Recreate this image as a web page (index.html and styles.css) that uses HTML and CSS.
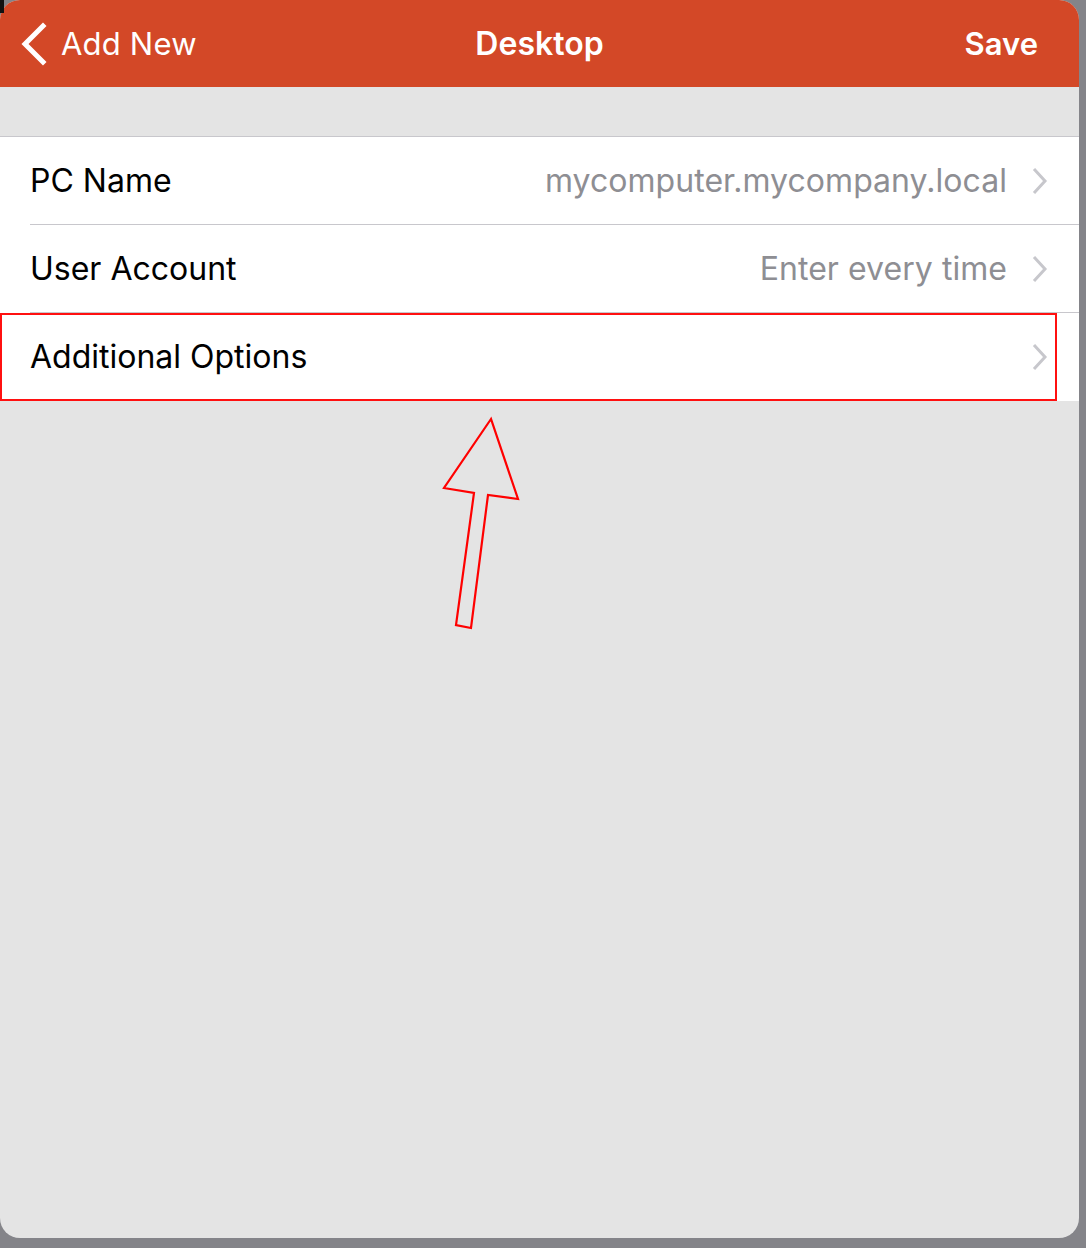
FILE: index.html
```html
<!DOCTYPE html>
<html>
<head>
<meta charset="utf-8">
<link rel="stylesheet" href="styles.css">
</head>
<body>
<div class="mark"></div>
<div class="panel">
  <header class="navbar">
    <div class="nav-left">
      <svg class="back" width="30" height="44" viewBox="0 0 30 44"><path d="M24 4 L6 22 L24 40" fill="none" stroke="#fff" stroke-width="5" stroke-linecap="square"/></svg>
      <span>Add New</span>
    </div>
    <div class="nav-title">Desktop</div>
    <div class="nav-right">Save</div>
  </header>
  <div class="spacer"></div>
  <div class="list">
    <div class="row">
      <span class="label">PC Name</span>
      <span class="value">mycomputer.mycompany.local</span>
      <svg class="chev" width="16" height="28" viewBox="0 0 16 28"><path d="M2 2 L13 14 L2 26" fill="none" stroke="#c7c7cc" stroke-width="3"/></svg>
    </div>
    <div class="row">
      <span class="label">User Account</span>
      <span class="value">Enter every time</span>
      <svg class="chev" width="16" height="28" viewBox="0 0 16 28"><path d="M2 2 L13 14 L2 26" fill="none" stroke="#c7c7cc" stroke-width="3"/></svg>
    </div>
    <div class="row last highlighted">
      <span class="label">Additional Options</span>
      <span class="value"></span>
      <svg class="chev" width="16" height="28" viewBox="0 0 16 28"><path d="M2 2 L13 14 L2 26" fill="none" stroke="#c7c7cc" stroke-width="3"/></svg>
    </div>
  </div>
  <svg class="arrow" width="1079" height="260" viewBox="0 400 1079 260">
    <polygon points="491,419 444,488 474,493 456,625 471,628 488,495 518,499" fill="none" stroke="#ff0000" stroke-width="2.2" stroke-linejoin="miter"/>
  </svg>
</div>
</body>
</html>
```
FILE: styles.css
```css
html, body {
  margin: 0;
  padding: 0;
}
body {
  background: #848489;
  width: 1086px;
  height: 1248px;
  position: relative;
  font-family: "Inter", "Liberation Sans", sans-serif;
  overflow: hidden;
}
.mark {
  position: absolute;
  left: 0;
  top: 0;
  width: 4px;
  height: 13px;
  background: #111;
  z-index: 2;
}
.panel {
  position: relative;
  width: 1079px;
  height: 1238px;
  background: #e4e4e4;
  border-radius: 20px;
  overflow: hidden;
}
.navbar {
  height: 87px;
  background: #d34827;
  display: grid;
  grid-template-columns: 1fr auto 1fr;
  align-items: center;
  color: #fff;
  font-size: 31px;
}
.nav-left {
  display: flex;
  align-items: center;
  padding-left: 19px;
  gap: 12px;
  letter-spacing: 0.2px;
}
.back {
  display: block;
}
.nav-title {
  font-weight: 600;
  font-size: 32px;
}
.nav-right {
  text-align: right;
  padding-right: 41px;
  font-weight: 600;
}
.spacer {
  height: 49px;
  border-bottom: 1px solid #c8c7cc;
}
.list {
  background: #fff;
}
.row {
  height: 87px;
  display: flex;
  align-items: center;
  margin-left: 30px;
  padding-right: 31px;
  border-bottom: 1px solid #c8c7cc;
  font-size: 32px;
}
.row.last {
  margin-left: 0;
  padding-left: 30px;
  border-bottom: 1px solid #c8c7cc;
}
.row.highlighted {
  outline: 2px solid #ff1010;
  outline-offset: -2px;
  margin-right: 22px;
  padding-right: 9px;
}
.label {
  color: #000;
  flex: 1;
}
.value {
  color: #8e8e93;
  margin-right: 25px;
  letter-spacing: 0.05px;
}
.chev {
  display: block;
}
.arrow {
  position: absolute;
  left: 0;
  top: 400px;
}
```
